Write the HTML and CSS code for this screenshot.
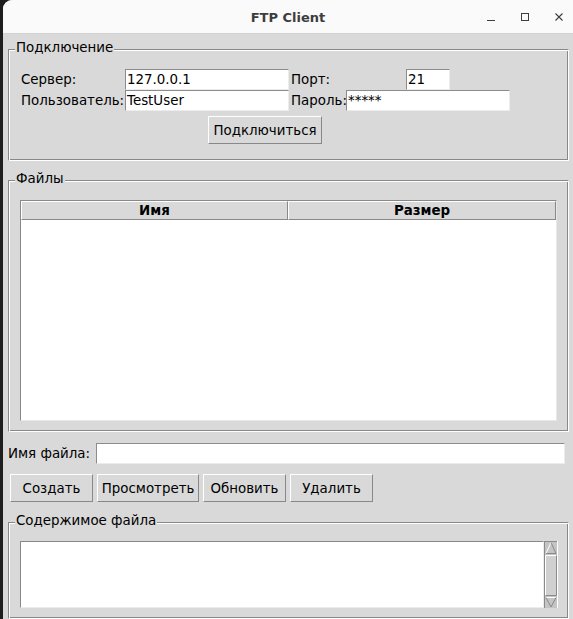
FILE: index.html
```html
<!DOCTYPE html>
<html lang="ru">
<head>
<meta charset="utf-8">
<title>FTP Client</title>
<link rel="stylesheet" href="styles.css">
</head>
<body>
<div class="window">
  <header class="titlebar">
    <div class="tb-side"></div>
    <div class="title">FTP Client</div>
    <div class="tb-side controls">
      <span class="ctl"><svg width="16" height="16" viewBox="0 0 16 16"><line x1="4" y1="11.5" x2="12" y2="11.5" stroke="#3d3d3d" stroke-width="1"/></svg></span>
      <span class="ctl"><svg width="16" height="16" viewBox="0 0 16 16"><rect x="4.5" y="4.5" width="7" height="7" fill="none" stroke="#3d3d3d" stroke-width="1"/></svg></span>
      <span class="ctl"><svg width="16" height="16" viewBox="0 0 16 16"><path d="M4.5 4.5 L11.5 11.5 M11.5 4.5 L4.5 11.5" stroke="#3d3d3d" stroke-width="1.1"/></svg></span>
    </div>
  </header>

  <main class="content">
    <section class="group group-conn">
      <span class="group-label">Подключение</span>
      <div class="conn-grid">
        <span class="lbl">Сервер:</span>
        <div class="entry">127.0.0.1</div>
        <span class="lbl lbl-right">Порт:</span>
        <div class="entry entry-port">21</div>

        <span class="lbl">Пользователь:</span>
        <div class="entry">TestUser</div>
        <span class="lbl lbl-right">Пароль:</span>
        <div class="entry">*****</div>

        <button class="btn btn-connect">Подключиться</button>
      </div>
    </section>

    <section class="group group-files">
      <span class="group-label">Файлы</span>
      <div class="tree">
        <div class="tree-head">
          <div class="th">Имя</div>
          <div class="th">Размер</div>
        </div>
        <div class="tree-body"></div>
      </div>
    </section>

    <div class="file-row">
      <span class="file-lbl">Имя файла:</span>
      <div class="entry entry-file"></div>
    </div>

    <div class="btn-row">
      <button class="btn btn-act">Создать</button>
      <button class="btn btn-act btn-wide">Просмотреть</button>
      <button class="btn btn-act">Обновить</button>
      <button class="btn btn-act">Удалить</button>
    </div>

    <section class="group group-content">
      <span class="group-label">Содержимое файла</span>
      <div class="text-row">
        <div class="textarea"></div>
        <svg class="scrollbar" width="14" height="67" viewBox="0 0 14 67">
          <rect x="0" y="0" width="14" height="67" fill="#c4c4c4"/>
          <line x1="0.5" y1="0" x2="0.5" y2="67" stroke="#8a8a8a"/>
          <line x1="0" y1="0.5" x2="14" y2="0.5" stroke="#8a8a8a"/>
          <polygon points="2,12.5 7,1.5 12,12.5" fill="#c4c4c4"/>
          <polyline points="2,12.5 7,1.5" fill="none" stroke="#ffffff"/>
          <polyline points="7,1.5 12,12.5 2,12.5" fill="none" stroke="#8a8a8a"/>
          <rect x="1.5" y="14.5" width="11" height="40" fill="#d0d0d0" stroke="none"/>
          <polyline points="1.5,54.5 1.5,14.5 12.5,14.5" fill="none" stroke="#ffffff"/>
          <polyline points="12.5,14.5 12.5,54.5 1.5,54.5" fill="none" stroke="#8a8a8a"/>
          <polygon points="2,56.5 12,56.5 7,66" fill="#c4c4c4"/>
          <polyline points="2,56.5 12,56.5" fill="none" stroke="#ffffff"/>
          <polyline points="2,56.5 7,66 12,56.5" fill="none" stroke="#8a8a8a"/>
          <line x1="13.5" y1="0" x2="13.5" y2="67" stroke="#ffffff"/>
        </svg>
      </div>
    </section>
  </main>
</div>
</body>
</html>
```

FILE: styles.css
```css
* {
  box-sizing: border-box;
  margin: 0;
  padding: 0;
}

html, body {
  height: 100%;
}

body {
  background: #1e1e1e;
  font-family: "DejaVu Sans", sans-serif;
  font-size: 13.4px;
  color: #000;
  overflow: hidden;
}

.window {
  margin-left: 3px;
  width: 570px;
  height: 619px;
  background: #d9d9d9;
  border-top-left-radius: 9px;
  overflow: hidden;
  display: flex;
  flex-direction: column;
}

/* ---------- title bar ---------- */
.titlebar {
  height: 34px;
  flex: none;
  background: #fafafa;
  border-bottom: 1px solid #d2d2d2;
  display: grid;
  grid-template-columns: 1fr auto 1fr;
  align-items: center;
}

.title {
  font-weight: bold;
  font-size: 13px;
  color: #3d3d3d;
  padding-top: 1px;
}

.controls {
  display: flex;
  justify-content: flex-end;
  gap: 18px;
  padding-right: 6px;
  padding-top: 1px;
}

.ctl {
  width: 16px;
  height: 16px;
  display: block;
}

.ctl svg {
  display: block;
}

/* ---------- content ---------- */
.content {
  flex: 1;
  padding: 15px 0 0 5px;
}

.group {
  position: relative;
  width: 561px;
  border: 1px solid;
  border-color: #888 #fff #fff #888;
  box-shadow: inset 1px 1px 0 #fff, inset -1px -1px 0 #888;
}

.group-label {
  position: absolute;
  top: -10px;
  left: 6px;
  background: #d9d9d9;
  padding: 0 1px;
  line-height: 16px;
  white-space: nowrap;
}

/* connection */
.group-conn {
  padding: 19px 0 16px 11px;
}

.conn-grid {
  display: grid;
  grid-template-columns: 105px 164px 57px 164px;
  grid-template-rows: 21px 21px auto;
}

.lbl {
  line-height: 21px;
  padding-left: 1px;
  white-space: nowrap;
}

.lbl-right {
  padding-left: 2px;
}

.entry {
  background: #fff;
  border: 1px solid;
  border-color: #8c8c8c #ececec #ececec #8c8c8c;
  height: 21px;
  line-height: 19px;
  padding-left: 1px;
  white-space: nowrap;
  overflow: hidden;
}

.entry-port {
  width: 44px;
  justify-self: center;
}

.btn {
  background: #d9d9d9;
  border: 1px solid;
  border-color: #fff #888 #888 #fff;
  height: 28px;
  font: inherit;
  color: #000;
  display: flex;
  align-items: center;
  justify-content: center;
  white-space: nowrap;
}

.btn-connect {
  grid-column: 1 / -1;
  justify-self: center;
  width: 114px;
  margin-top: 5px;
}

/* files */
.group-files {
  margin-top: 19px;
  padding: 19px 0 10px 11px;
}

.tree {
  width: 537px;
  height: 221px;
  border: 1px solid;
  border-color: #888 #e8e8e8 #e8e8e8 #888;
  background: #fff;
  display: flex;
  flex-direction: column;
}

.tree-head {
  display: grid;
  grid-template-columns: 267px 1fr;
  height: 19px;
  flex: none;
}

.th {
  background: #d9d9d9;
  border: 1px solid;
  border-color: #fff #888 #888 #fff;
  font-weight: bold;
  text-align: center;
  line-height: 17px;
}

.tree-body {
  flex: 1;
  background: #fff;
}

/* file name row */
.file-row {
  margin-top: 11px;
  display: flex;
  align-items: center;
  height: 21px;
}

.file-lbl {
  width: 88px;
  white-space: nowrap;
}

.entry-file {
  width: 469px;
}

/* action buttons */
.btn-row {
  margin-top: 10px;
  margin-left: 2px;
  display: flex;
  gap: 4px;
}

.btn-act {
  width: 83px;
}

.btn-wide {
  width: 102px;
}

/* file content */
.group-content {
  margin-top: 20px;
  padding: 18px 0 10px 11px;
}

.text-row {
  display: flex;
  height: 67px;
}

.textarea {
  width: 524px;
  height: 67px;
  background: #fff;
  border: 1px solid;
  border-color: #888 #ececec #ececec #888;
}

.scrollbar {
  display: block;
  flex: none;
}
```
